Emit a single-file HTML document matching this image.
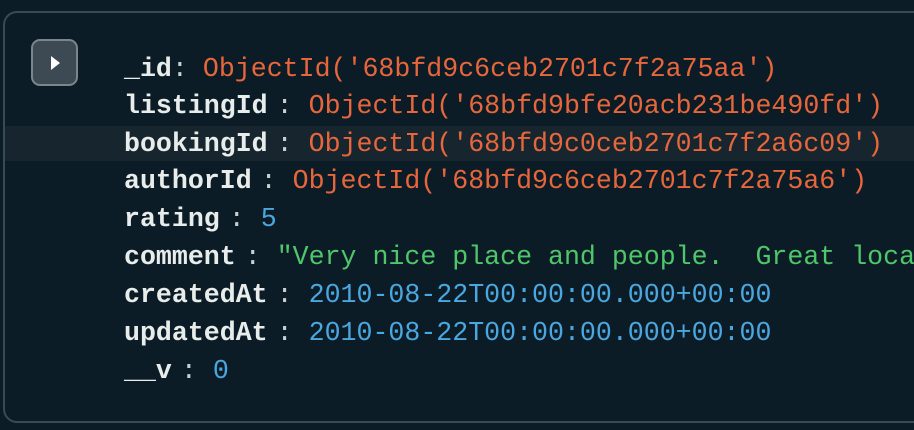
<!DOCTYPE html>
<html><head><style>
html,body{margin:0;padding:0;background:#0b1c26;width:914px;height:430px;overflow:hidden}
.wrap{position:absolute;left:0;top:0;width:914px;height:430px;overflow:hidden}
.panel{position:absolute;left:3px;top:11px;width:940px;height:412px;border:2px solid #3a4a52;border-radius:14px;box-sizing:border-box}
.btn{position:absolute;left:31px;top:39px;width:47px;height:47px;box-sizing:border-box;border:2px solid #7a868c;border-radius:9px;background:#3d4a53}
.btn svg{position:absolute;left:15px;top:12px}
.hl{position:absolute;left:5px;top:126px;width:909px;height:35px;background:#17252e}
.line{position:absolute;left:124px;font-family:"Liberation Mono",monospace;font-size:26.6px;white-space:pre;line-height:38px;height:38px}
.k{color:#e8edeb;font-weight:bold}
.c{color:#c8d0d2;display:inline-block;margin:0 16px 0 9px}
.o{color:#e8663c}.g{color:#4fc66a}.b{color:#4aa7e0}
</style></head><body><div class="wrap">
<div class="panel"></div>
<div class="hl"></div>
<div class="btn"><svg width="14" height="20" viewBox="0 0 14 20"><path d="M3 3 L12 10 L3 17 Z" fill="#fff"/></svg></div>
<div class="line" style="top:50px"><span class="k">_id</span><span class="c" style="margin:0 15px 0 0">:</span><span class="o">ObjectId('68bfd9c6ceb2701c7f2a75aa')</span></div>
<div class="line" style="top:87px"><span class="k">listingId</span><span class="c">:</span><span class="o">ObjectId('68bfd9bfe20acb231be490fd')</span></div>
<div class="line" style="top:125px"><span class="k">bookingId</span><span class="c">:</span><span class="o">ObjectId('68bfd9c0ceb2701c7f2a6c09')</span></div>
<div class="line" style="top:162px"><span class="k">authorId</span><span class="c">:</span><span class="o">ObjectId('68bfd9c6ceb2701c7f2a75a6')</span></div>
<div class="line" style="top:200px"><span class="k">rating</span><span class="c">:</span><span class="b">5</span></div>
<div class="line" style="top:238px"><span class="k">comment</span><span class="c">:</span><span class="g">"Very nice place and people.  Great loca</span></div>
<div class="line" style="top:276px"><span class="k">createdAt</span><span class="c">:</span><span class="b">2010-08-22T00:00:00.000+00:00</span></div>
<div class="line" style="top:314px"><span class="k">updatedAt</span><span class="c">:</span><span class="b">2010-08-22T00:00:00.000+00:00</span></div>
<div class="line" style="top:352px"><span class="k">__v</span><span class="c">:</span><span class="b">0</span></div>
</div></body></html>
